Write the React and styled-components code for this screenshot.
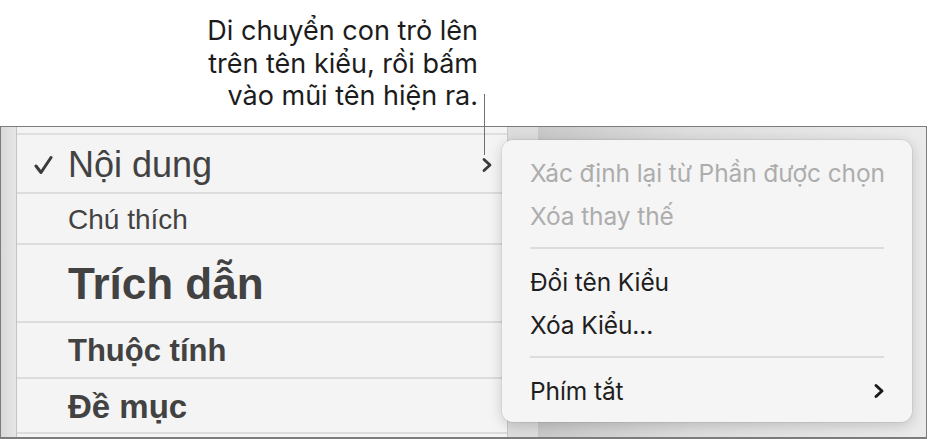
import React from "react";
import styled, { createGlobalStyle } from "styled-components";

const Global = createGlobalStyle`
  html, body {
    margin: 0;
    padding: 0;
    background: #ffffff;
  }
  #root {
    width: 928px;
    height: 439px;
    overflow: hidden;
  }
`;

const styles = [
  { name: "Nội dung", size: 36, weight: 400, height: 59, checked: true, arrow: true },
  { name: "Chú thích", size: 28, weight: 400, height: 51 },
  { name: "Trích dẫn", size: 44, weight: 700, height: 78 },
  { name: "Thuộc tính", size: 31, weight: 700, height: 56 },
  { name: "Đề mục", size: 33, weight: 700, height: 55 },
];

const Chevron = ({ color = "#3a3a3a", width = 2.8 }) => (
  <svg width="12" height="16" viewBox="0 0 12 16">
    <path
      d="M3 2.5 L9 8 L3 13.5"
      fill="none"
      stroke={color}
      strokeWidth={width}
      strokeLinecap="round"
      strokeLinejoin="round"
    />
  </svg>
);

const Check = () => (
  <svg width="19" height="20" viewBox="0 0 19 20">
    <path
      d="M2 11 L7 17.5 L17 2.5"
      fill="none"
      stroke="#3a3a3a"
      strokeWidth="3"
      strokeLinecap="round"
      strokeLinejoin="round"
    />
  </svg>
);

export default () => (
  <Page>
    <Global />
    <Callout>
      <CalloutText>
        Di chuyển con trỏ lên
        <br />
        trên tên kiểu, rồi bấm
        <br />
        vào mũi tên hiện ra.
      </CalloutText>
    </Callout>
    <CalloutLine />
    <Frame>
      <Gutter />
      <List>
        <TopSliver />
        {styles.map(s => (
          <Row key={s.name} $height={s.height}>
            <CheckSlot>{s.checked && <Check />}</CheckSlot>
            <StyleName $size={s.size} $weight={s.weight}>
              {s.name}
            </StyleName>
            {s.arrow && (
              <RowArrow>
                <Chevron />
              </RowArrow>
            )}
          </Row>
        ))}
      </List>
      <ScrollColumn />
      <Backdrop />
    </Frame>
    <Menu>
      <MenuItem $disabled>Xác định lại từ Phần được chọn</MenuItem>
      <MenuItem $disabled>Xóa thay thế</MenuItem>
      <Separator />
      <MenuItem>Đổi tên Kiểu</MenuItem>
      <MenuItem>Xóa Kiểu...</MenuItem>
      <Separator />
      <MenuItem>
        Phím tắt
        <SubArrow>
          <Chevron color="#1a1a1a" width={3} />
        </SubArrow>
      </MenuItem>
    </Menu>
  </Page>
);

const Page = styled.div`
  position: relative;
  width: 928px;
  height: 439px;
  font-family: Inter, Roboto, sans-serif;
`;

const Callout = styled.div`
  height: 126px;
  width: 478px;
  display: flex;
  justify-content: flex-end;
  align-items: flex-start;
  padding-top: 15px;
  box-sizing: border-box;
`;

const CalloutText = styled.div`
  text-align: right;
  font-size: 27px;
  line-height: 32.5px;
  color: #1c1c1c;
`;

const CalloutLine = styled.div`
  position: absolute;
  left: 484px;
  top: 94px;
  width: 1px;
  height: 61px;
  background: #6f6f6f;
`;

const Frame = styled.div`
  height: 313px;
  width: 927px;
  box-sizing: border-box;
  border: 1px solid #7c7c7c;
  border-bottom-width: 2px;
  display: flex;
  background: #f3f3f3;
`;

const Gutter = styled.div`
  width: 15px;
  background: linear-gradient(to right, #d9d9d9, #e6e6e6);
  border-right: 1px solid #c4c4c4;
`;

const List = styled.div`
  width: 490px;
  display: flex;
  flex-direction: column;
  background: #f4f4f4;
  font-family: "Liberation Sans", Arial, sans-serif;
  color: #424242;
`;

const TopSliver = styled.div`
  height: 6px;
  border-bottom: 2px solid #dfdfdf;
`;

const Row = styled.div`
  height: ${p => p.$height}px;
  box-sizing: border-box;
  border-bottom: 2px solid #dcdcdc;
  display: flex;
  align-items: center;
  padding-top: 2px;
`;

const CheckSlot = styled.div`
  width: 51px;
  display: flex;
  justify-content: flex-end;
  padding-right: 15px;
  box-sizing: border-box;
`;

const StyleName = styled.div`
  font-size: ${p => p.$size}px;
  font-weight: ${p => p.$weight};
  flex: 1;
`;

const RowArrow = styled.div`
  display: flex;
  padding-right: 14px;
`;

const ScrollColumn = styled.div`
  width: 30px;
  background: #dddddd;
  border-left: 1px solid #c8c8c8;
`;

const Backdrop = styled.div`
  flex: 1;
  background: linear-gradient(to right, #c9c9c9, #dedede 40%, #ebebeb);
`;

const Menu = styled.div`
  position: absolute;
  left: 502px;
  top: 140px;
  width: 410px;
  height: 282px;
  box-sizing: border-box;
  padding: 11px 20px 0 28px;
  border-radius: 11px;
  background: #f5f5f5;
  box-shadow: 0 3px 14px rgba(0, 0, 0, 0.18), 0 0 0 1px rgba(0, 0, 0, 0.05);
  display: flex;
  flex-direction: column;
`;

const MenuItem = styled.div`
  height: 43px;
  display: flex;
  align-items: center;
  justify-content: space-between;
  white-space: nowrap;
  font-size: 24.5px;
  letter-spacing: -0.1px;
  color: ${p => (p.$disabled ? "#adadad" : "#1e1e1e")};
`;

const SubArrow = styled.div`
  display: flex;
  margin-right: 7px;
`;

const Separator = styled.div`
  height: 2px;
  background: #dcdcdc;
  margin: 10px 8px 11px 0;
`;
